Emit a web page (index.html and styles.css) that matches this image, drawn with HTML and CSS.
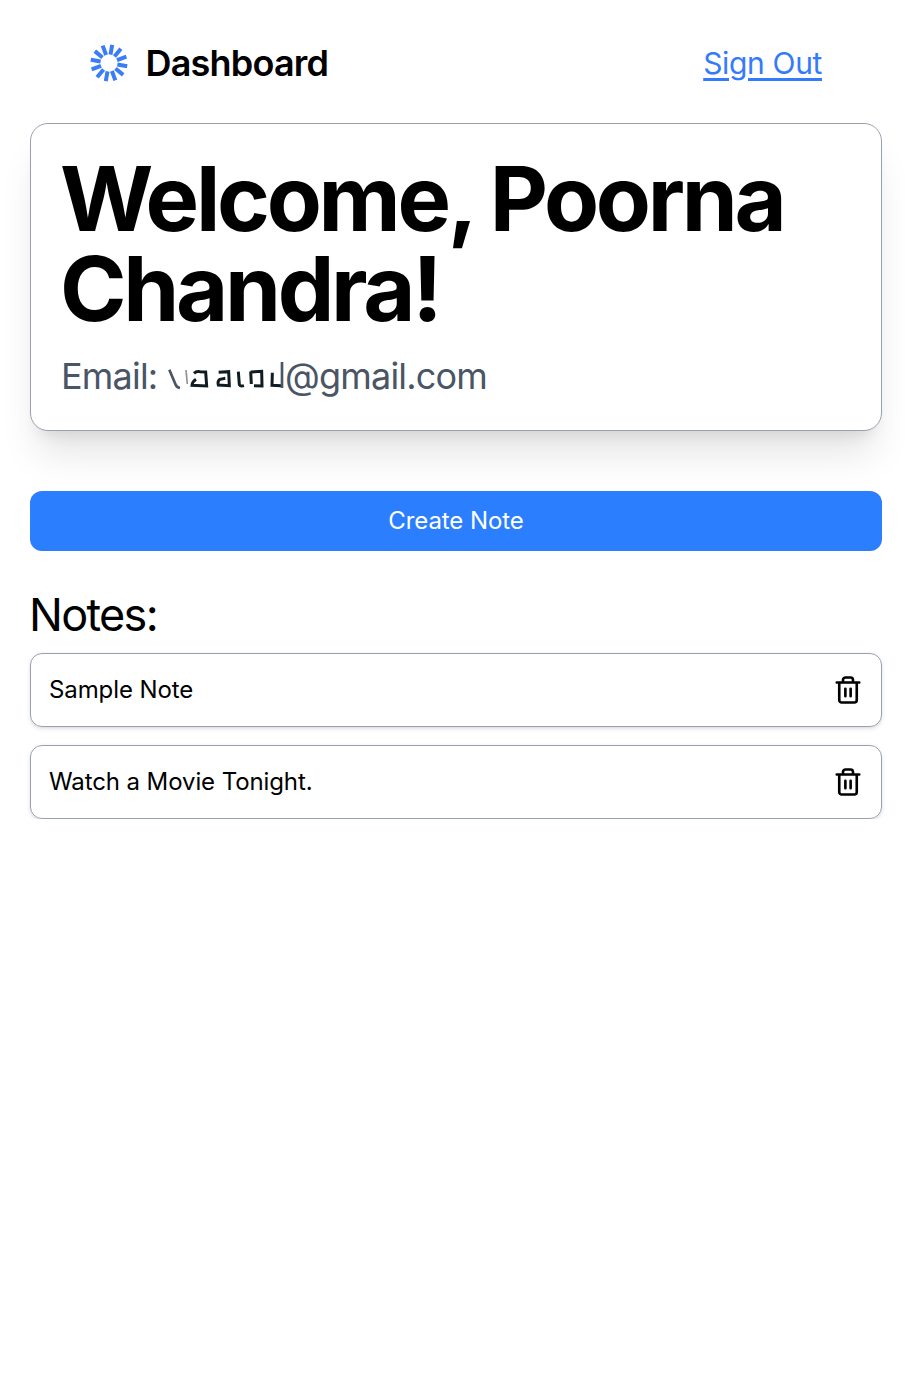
FILE: index.html
```html
<!DOCTYPE html>
<html lang="en">
<head>
<meta charset="utf-8">
<title>Dashboard</title>
<link rel="stylesheet" href="styles.css">
</head>
<body>
<header class="topbar">
  <div class="brand">
    <svg class="logo" viewBox="-19 -19 38 38" aria-hidden="true">
      <g transform="rotate(-20)">
        <path d="M0-8.5V-18.5M4.25-7.36L9.25-16.02M7.36-4.25L16.02-9.25M8.5 0H18.5M7.36 4.25L16.02 9.25M4.25 7.36L9.25 16.02M0 8.5V18.5M-4.25 7.36L-9.25 16.02M-7.36 4.25L-16.02 9.25M-8.5 0H-18.5M-7.36-4.25L-16.02-9.25M-4.25-7.36L-9.25-16.02"/>
      </g>
    </svg>
    <span class="brand-name">Dashboard</span>
  </div>
  <a class="sign-out" href="#">Sign Out</a>
</header>
<main class="content">
  <section class="welcome">
    <h1 class="welcome-title">Welcome, Poorna Chandra!</h1>
    <p class="email"><span class="email-label">Email:</span><svg class="redacted" viewBox="354 35 351 90" aria-hidden="true">
      <path class="slate" d="M358 61L377 106Q380 114 390 116"/>
      <path class="faint" d="M408 62L412 104"/>
      <path class="ink" d="M432 72Q440 64 450 67L467 68L470 110L426 108Q427 97 438 90"/>
      <path class="ink" d="M506 69L536 67L538 109L505 107Q502 94 510 90L526 87M565 67L568 106Q571 112 582 109M602 66L604 104M602 68L635 66L636 110L612 109M667 70L666 108L694 109"/>
      <path class="slate" d="M696 38V116"/>
    </svg><span>@gmail.com</span></p>
  </section>
  <button class="create">Create Note</button>
  <h2 class="notes-title">Notes:</h2>
  <ul class="notes">
    <li class="note"><span>Sample Note</span>
      <svg class="trash" viewBox="0 0 24 24" aria-hidden="true"><path d="M3 6h18M19 6v14a2 2 0 0 1-2 2H7a2 2 0 0 1-2-2V6M8 6V4a2 2 0 0 1 2-2h4a2 2 0 0 1 2 2v2M9.9 11v6M14.1 11v6"/></svg></li>
    <li class="note"><span>Watch a Movie Tonight.</span>
      <svg class="trash" viewBox="0 0 24 24" aria-hidden="true"><path d="M3 6h18M19 6v14a2 2 0 0 1-2 2H7a2 2 0 0 1-2-2V6M8 6V4a2 2 0 0 1 2-2h4a2 2 0 0 1 2 2v2M9.9 11v6M14.1 11v6"/></svg></li>
  </ul>
</main>
</body>
</html>
```
FILE: styles.css
```css
* { box-sizing: border-box; margin: 0; padding: 0; }
body { background: #fff; color: #000; font: 24px/36px Inter, sans-serif; letter-spacing: -.1px; }
.topbar { display: flex; align-items: center; justify-content: space-between; height: 123px; padding: 2px 83px 0 90px; }
.brand { display: flex; align-items: center; gap: 17.5px; }
.logo { width: 38px; height: 38px; fill: none; stroke: #3b7df8; stroke-width: 4; }
.brand-name { font-size: 36px; line-height: 48px; font-weight: 600; letter-spacing: -.8px; }
.sign-out { font-size: 30px; line-height: 42px; letter-spacing: -.35px; color: #347bfb; text-decoration: underline; text-decoration-thickness: 3px; text-underline-offset: 4px; }
.content { padding: 0 23px 0 30px; }
.welcome { height: 308px; padding: 30px; border: 1px solid #99a1af; border-radius: 18px; background: #fff; box-shadow: 0 30px 37.5px -7.5px rgba(0,0,0,.1), 0 12px 15px -9px rgba(0,0,0,.1); }
.welcome-title { margin-left: -1px; font-size: 90px; line-height: 90px; font-weight: 700; letter-spacing: -3.3px; }
.email { display: flex; align-items: center; margin-top: 18px; height: 48px; font-size: 36px; line-height: 48px; letter-spacing: -.8px; color: #4a5565; }
.email-label { width: 107px; }
.redacted { width: 117px; height: 30px; fill: none; }
.slate { stroke: #4a5565; stroke-width: 8; }
.faint { stroke: #8f938f; stroke-width: 5; }
.ink { stroke: #111c22; stroke-width: 9; }
.create { display: block; width: 100%; height: 60px; margin-top: 60px; border: 0; border-radius: 12px; background: #2b7fff; color: #fff; font: inherit; letter-spacing: -.09px; }
.notes-title { margin: 37px 0 0 -1px; font-size: 45px; line-height: 54px; font-weight: 400; letter-spacing: -1.7px; }
.notes { display: grid; gap: 18px; margin-top: 11px; list-style: none; }
.note { display: flex; align-items: center; justify-content: space-between; height: 74px; padding: 0 18px; border: 1px solid #99a1af; border-radius: 12px; box-shadow: 0 1.5px 4.5px rgba(0,0,0,.1), 0 1.5px 3px -1.5px rgba(0,0,0,.1); }
.trash { width: 30px; height: 30px; fill: none; stroke: #000; stroke-width: 2.1; stroke-linecap: round; stroke-linejoin: round; }
```
